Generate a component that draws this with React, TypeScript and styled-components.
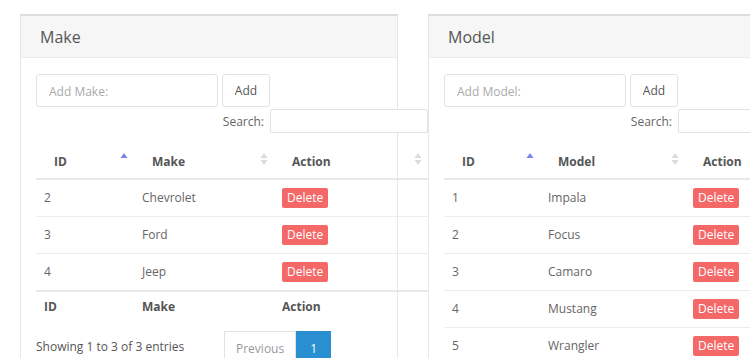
import styled, { createGlobalStyle } from "styled-components";

const GlobalStyle = createGlobalStyle`
  html, body {
    margin: 0;
    padding: 0;
    background: #fff;
    font-family: "Open Sans", "Liberation Sans", sans-serif;
    color: #555;
  }
`;

interface Row {
  id: number;
  name: string;
}

interface PanelProps {
  title: string;
  field: string;
  rows: Row[];
  cols: number[];
  footer?: boolean;
}

const makes: Row[] = [
  { id: 2, name: "Chevrolet" },
  { id: 3, name: "Ford" },
  { id: 4, name: "Jeep" },
];

const models: Row[] = [
  { id: 1, name: "Impala" },
  { id: 2, name: "Focus" },
  { id: 3, name: "Camaro" },
  { id: 4, name: "Mustang" },
  { id: 5, name: "Wrangler" },
];

const SortIcon = ({ active }: { active?: boolean }) =>
  active ? (
    <svg width="8" height="12" viewBox="0 0 8 12">
      <path d="M4 1 L7.5 6 L0.5 6 Z" fill="#7d82ee" />
    </svg>
  ) : (
    <svg width="8" height="14" viewBox="0 0 8 14">
      <path d="M4 1 L7.5 6 L0.5 6 Z" fill="#dcdcdc" />
      <path d="M4 13 L7.5 8 L0.5 8 Z" fill="#dcdcdc" />
    </svg>
  );

const Panel = ({ title, field, rows, cols, footer }: PanelProps) => (
  <Card>
    <CardHeader>{title}</CardHeader>
    <CardBody>
      <AddRow>
        <TextInput placeholder={`Add ${field}:`} />
        <Button>Add</Button>
      </AddRow>
      <Wrapper>
        <SearchRow>
          <label>Search:</label>
          <SearchInput />
        </SearchRow>
        <Table>
          <colgroup>
            {cols.map((w, i) => (
              <col key={i} style={{ width: w }} />
            ))}
          </colgroup>
          <thead>
            <tr>
              <Th>
                ID
                <SortSlot>
                  <SortIcon active />
                </SortSlot>
              </Th>
              <Th>
                {field}
                <SortSlot>
                  <SortIcon />
                </SortSlot>
              </Th>
              <Th>
                Action
                <SortSlot>
                  <SortIcon />
                </SortSlot>
              </Th>
            </tr>
          </thead>
          <tbody>
            {rows.map((r) => (
              <tr key={r.id}>
                <Td>{r.id}</Td>
                <Td>{r.name}</Td>
                <Td>
                  <DeleteButton>Delete</DeleteButton>
                </Td>
              </tr>
            ))}
          </tbody>
          {footer && (
            <tfoot>
              <tr>
                <Tf>ID</Tf>
                <Tf>{field}</Tf>
                <Tf>Action</Tf>
              </tr>
            </tfoot>
          )}
        </Table>
        {footer && (
          <InfoRow>
            <Info>Showing 1 to 3 of 3 entries</Info>
            <Pager>
              <PageLink>Previous</PageLink>
              <PageLink $active>1</PageLink>
            </Pager>
          </InfoRow>
        )}
      </Wrapper>
    </CardBody>
  </Card>
);

export default function App() {
  return (
    <>
      <GlobalStyle />
      <Page>
        <Panel title="Make" field="Make" rows={makes} cols={[98, 140, 154]} footer />
        <Panel title="Model" field="Model" rows={models} cols={[96, 145, 151]} />
      </Page>
    </>
  );
}

const Page = styled.div`
  width: 750px;
  height: 358px;
  overflow: hidden;
  display: flex;
  align-items: flex-start;
  gap: 30px;
  padding: 14px 0 0 20px;
  box-sizing: border-box;
`;

const Card = styled.div`
  flex: none;
  width: 378px;
  min-height: 400px;
  box-sizing: border-box;
  background: #fff;
  border: 1px solid #e7e7e7;
  border-top: 2px solid #dcdcdc;
`;

const CardHeader = styled.div`
  height: 42px;
  box-sizing: border-box;
  padding: 0 19px;
  display: flex;
  align-items: center;
  background: #f6f6f6;
  border-bottom: 1px solid #ececec;
  font-size: 16px;
  color: #555;
`;

const CardBody = styled.div`
  padding: 16px 15px 0;
`;

const AddRow = styled.div`
  display: flex;
  gap: 4px;
`;

const TextInput = styled.input`
  width: 182px;
  height: 33px;
  box-sizing: border-box;
  border: 1px solid #e2e2e2;
  border-radius: 3px;
  padding: 1px 12px 0;
  font: 12px "Open Sans", sans-serif;
  color: #555;
  outline: none;
  &::placeholder {
    color: #aaa;
  }
`;

const Button = styled.button`
  width: 48px;
  height: 33px;
  box-sizing: border-box;
  background: #fff;
  border: 1px solid #e2e2e2;
  border-radius: 3px;
  font: 12px "Open Sans", sans-serif;
  color: #555;
`;

const Wrapper = styled.div`
  width: 392px;
`;

const SearchRow = styled.div`
  display: flex;
  justify-content: flex-end;
  align-items: center;
  gap: 6px;
  margin-top: 2px;
  font-size: 12px;
  color: #666;
`;

const SearchInput = styled.input`
  width: 158px;
  height: 24px;
  box-sizing: border-box;
  border: 1px solid #e2e2e2;
  border-radius: 2px;
  outline: none;
`;

const Table = styled.table`
  width: 100%;
  table-layout: fixed;
  border-collapse: collapse;
  margin-top: 9px;
  font-size: 12px;
`;

const Th = styled.th`
  position: relative;
  text-align: left;
  font-weight: 700;
  color: #555;
  padding: 11px 8px 7px 18px;
  line-height: 18px;
  border-bottom: 2px solid #e8e8e8;
`;

const SortSlot = styled.span`
  position: absolute;
  right: 6px;
  top: 10px;
  display: flex;
`;

const Td = styled.td`
  padding: 8px;
  line-height: 20px;
  color: #666;
  border-top: 1px solid #ececec;
`;

const Tf = styled.th`
  text-align: left;
  font-weight: 700;
  color: #555;
  padding: 6px 8px 10px;
  line-height: 18px;
  border-top: 2px solid #e8e8e8;
`;

const DeleteButton = styled.button`
  height: 20px;
  padding: 0 5px;
  border: none;
  border-radius: 2px;
  background: #f46868;
  color: #fff;
  font: 12px "Open Sans", sans-serif;
  line-height: 20px;
`;

const InfoRow = styled.div`
  display: flex;
  align-items: center;
  margin-top: 5px;
`;

const Info = styled.div`
  width: 188px;
  font-size: 12px;
  color: #555;
  margin-top: -3px;
`;

const Pager = styled.div`
  display: flex;
`;

const PageLink = styled.span<{ $active?: boolean }>`
  display: block;
  padding: 7px ${(p) => (p.$active ? "13px" : "11px")} 5px;
  line-height: 20px;
  font-size: 12px;
  border: 1px solid ${(p) => (p.$active ? "#2a8fd0" : "#e2e2e2")};
  background: ${(p) => (p.$active ? "#2a8fd0" : "#fff")};
  color: ${(p) => (p.$active ? "#fff" : "#999")};
`;
